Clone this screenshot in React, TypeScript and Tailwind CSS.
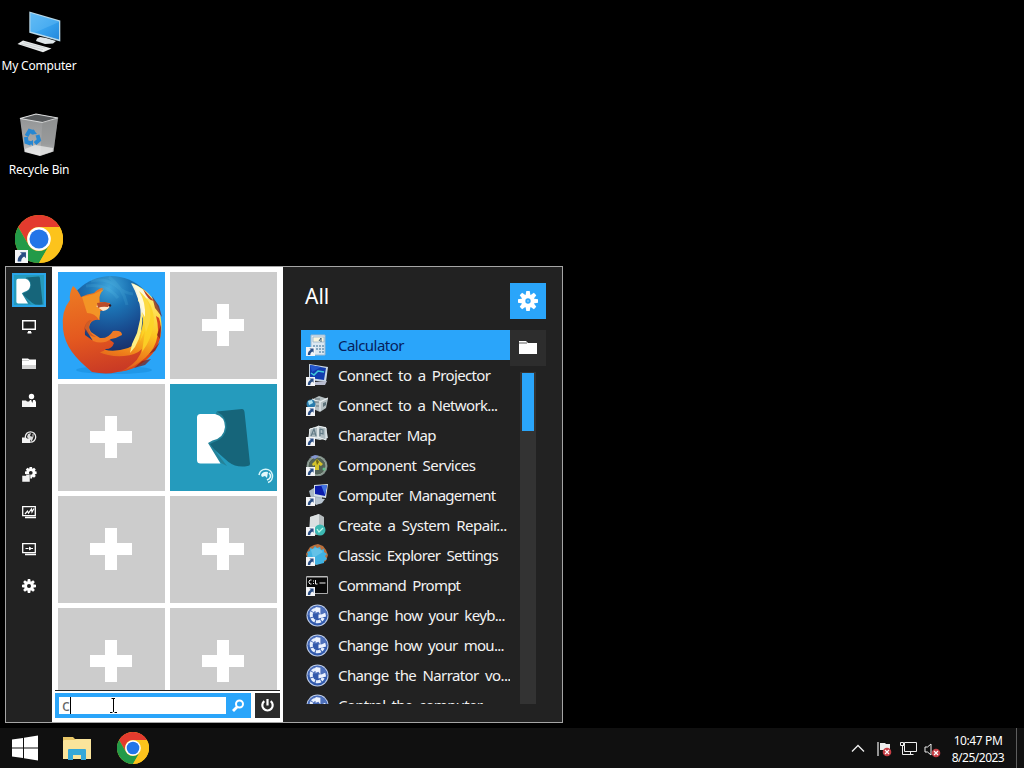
import React from "react";

const gearTeeth = [0, 45, 90, 135, 180, 225, 270, 315];

function Gear({ size, hole = "#222222", dot = false }: { size: number; hole?: string; dot?: boolean }) {
  return (
    <svg width={size} height={size} viewBox="0 0 20 20" className="block">
      <g fill="#fff">
        {gearTeeth.map((a) => (
          <path key={a} d="M8.300 0h3.400l.9 5H7.400z" transform={`rotate(${a} 10 10)`} />
        ))}
        <circle cx="10" cy="10" r="6.600" />
      </g>
      <circle cx="10" cy="10" r={dot ? 2.7 : 2.9} fill={hole} />
      {dot && <circle cx="10" cy="10" r="1" fill="#7fc6fa" />}
    </svg>
  );
}

function Chrome({ size }: { size: number }) {
  return (
    <svg width={size} height={size} viewBox="0 0 48 48" className="block">
      <circle cx="24" cy="24" r="24" fill="#fbc116" />
      <path d="M3.2 12A24 24 0 0 1 44.8 12H24A12 12 0 0 0 13.6 30Z" fill="#e33b2e" />
      <path d="M3.2 12A24 24 0 0 0 24 48L34.4 30A12 12 0 0 1 13.6 30Z" fill="#239a48" />
      <path d="M44.8 12A24 24 0 0 1 24 48L34.4 30A12 12 0 0 0 24 12Z" fill="#fcc31c" />
      <circle cx="24" cy="24" r="11.8" fill="#fff" />
      <circle cx="24" cy="24" r="9.5" fill="#2375e8" />
    </svg>
  );
}

function Shortcut({ size }: { size: number }) {
  return (
    <svg width={size} height={size} viewBox="0 0 12 12" className="absolute bottom-0 left-0 block">
      <path d="M0 0h12v12H0z" fill="#f4f5f7" />
      <path d="M4.6 2h5.5v5.6L8.4 5.9C6.5 7 5.9 8.2 5.7 10.5H2.5C2.2 7.500 3.800 5.200 6.300 3.800Z" fill="#294d84" />
    </svg>
  );
}

function MyComputer() {
  return (
    <svg width="48" height="48" viewBox="15 8 48 48" className="block">
      <defs>
        <linearGradient id="screen" x1="0" y1="0" x2="1" y2="1">
          <stop offset="0" stopColor="#5bb8f4" />
          <stop offset=".5" stopColor="#38a4ef" />
          <stop offset="1" stopColor="#2388dc" />
        </linearGradient>
      </defs>
      <path d="M29.300 11.500 60.300 20.500V41.500L29.300 32.800Z" fill="#b9d9ea" />
      <path d="M30.500 13 59 21.500V39.600L30.500 31.500Z" fill="url(#screen)" />
      <path d="M34 33 59 22v-1L30.500 13v18Z" fill="#72c4f7" opacity=".35" />
      <path d="M40 37 46 38 56 41l-3 2.500-8 .500-9-3 1-2.500Z" fill="#dfe6e9" />
      <path d="M17.500 44 23 40.500 51.500 48.500 43 52.200Z" fill="#e9ecec" />
      <path d="M21 44l22 5.700M23.500 42.500l22 5.600" stroke="#c0c7ca" strokeWidth=".7" />
    </svg>
  );
}

function RecycleBin() {
  return (
    <svg width="48" height="48" viewBox="15 112 48 48" className="block">
      <defs>
        <linearGradient id="bin" x1="0" y1="0" x2="0" y2="1">
          <stop offset="0" stopColor="#8f9192" />
          <stop offset=".7" stopColor="#a9aaab" />
          <stop offset="1" stopColor="#dedede" />
        </linearGradient>
      </defs>
      <path d="M20 118.500 36 114l22 4-4.500 33.500L40 156l-15.500-4Z" fill="url(#bin)" />
      <path d="M20 118.500 36 114l22 4-15.500 4.500Z" fill="#55585a" stroke="#d9dadb" strokeWidth="1.200" />
      <path d="M42.500 122.500 40 156l13.500-4.500L58 118Z" fill="#87898a" opacity=".45" />
      <path d="m25 149 10-4 18 3-.500 3.500L40 155.500l-15-4Z" fill="#ededed" opacity=".7" />
      <path d="m26.500 136 3-5 4.500 1.500M37.500 135l1.500 5-4 3.500M31 143.500l-4.500-1.500-.500-5" fill="none" stroke="#2787d2" strokeWidth="4" />
      <path d="m33 129 4 5-5.500.500ZM33 140v6l-4-3.500Z" fill="#2787d2" />
    </svg>
  );
}

function RMark({ size, className = "" }: { size: number; className?: string }) {
  return (
    <svg width={size} height={size} viewBox="0 0 107 107" className={`block ${className}`}>
      <path d="M47 27.500 72 25q2 0 2.500 3l5.500 52q0 2-2.500 2-11 2-19-4L38 60Z" fill="#16657a" />
      <path d="M47 27.500Q57 33 56.500 44 55 55 43 58.500L40 60l17 22-6-3L35 58Z" fill="#24839a" />
      <path d="M30.500 30H45Q55 32.500 55 43 54 54 42.500 56.500L38 59l12.500 20.500H30.500Q27 79.500 27 76V33.500Q27 30 30.500 30Z" fill="#fff" />
    </svg>
  );
}

function Firefox() {
  return (
    <svg width="107" height="107" viewBox="0 0 107 107" className="block">
      <defs>
        <radialGradient id="globe" cx=".48" cy=".12" r=".75">
          <stop offset="0" stopColor="#3fa5db" />
          <stop offset=".3" stopColor="#1c74b5" />
          <stop offset=".65" stopColor="#184a8e" />
          <stop offset="1" stopColor="#182a60" />
        </radialGradient>
        <linearGradient id="fox" x1=".3" y1="0" x2=".5" y2="1">
          <stop offset="0" stopColor="#ec7a23" />
          <stop offset=".55" stopColor="#e4591f" />
          <stop offset="1" stopColor="#c93a25" />
        </linearGradient>
        <linearGradient id="tail" x1=".2" y1="1" x2=".5" y2="0">
          <stop offset="0" stopColor="#cf4420" />
          <stop offset=".28" stopColor="#ed7a1a" />
          <stop offset=".58" stopColor="#fcc822" />
          <stop offset="1" stopColor="#fff179" />
        </linearGradient>
      </defs>
      <ellipse cx="56" cy="98" rx="38" ry="4" fill="#1689d8" opacity=".5" />
      <circle cx="53" cy="50.500" r="46.500" fill="url(#globe)" />
      <path d="M33 9q14-3 24 4 9 8 18 9M51 5q14 10 18 28M28 14q20-3 32 12" stroke="#68c8ed" strokeWidth="3" fill="none" opacity=".15" />
      <path d="M74 11C91 18 103 32 103.500 53 104 80 83 100 54 100 38 100 26 94 18 83l22-8q12 7 30 1 9-3 12-14 5-11 2-26-1-5-4-7 1-8-6-18Z" fill="url(#tail)" />
      <path d="M98 44q8 29-16 46-11 8-24 10 22-1 37-19 12-17 6-35Z" fill="#d8491c" />
      <path d="m94 24 7 10 3 11-7-9Zm9 29-4 10 3 4Zm-1 17-5 9-6 3Zm-9 17-6 6-11 3 8-7Z" fill="#7d221c" opacity=".75" />
      <path d="M73 11q13 5 19 16l-4-1q7 13 3 26l-3 8q-2-8-3-16l-3 8q2-15-2-25-3-9-7-16Z" fill="#fffbe0" opacity=".95" />
      <path d="M81 19q15 12 15 31-2 17-12 30l3-21-5 10q5-17 2-29l3 5q1-15-6-26Z" fill="#fbd426" opacity=".85" />
      <path d="M84 39q2 21-7 36l-5 6 2-9 5-11Z" fill="#ffef82" />
      <path d="m85 17 11 12q-6 0-11-12Z" fill="#b93e24" />
      <path d="M15 14q5 4 8 11 6-3 13-4 5-5 9-5-5 6-3 14l10 1-1 5q-6 3-9 3-2 4 0 9-7-1-10 4-6 4-5 11l7 5q7 2 12-2 6 1 10 5-2 6-8 6-4 4-7 3 10 5 25 4 12-1 18-7-2 11-16 20-14 7-34 3C17 86 7 74 5 57q-2-18 7-29-1-7 3-14Z" fill="url(#fox)" />
      <path d="m24 25 12-3 10-5q-7 7-4 16 1 8-1 15-4-7-12-7Z" fill="#f39426" />
      <path d="m38 34 8-2 6 1q-1 5-7 6Z" fill="#ffe6c9" />
      <path d="m39 31 8-1 5 2-2 3q-6-1-10 1Z" fill="#b94c2b" />
      <circle cx="52" cy="33.500" r="1.200" fill="#321922" />
      <path d="M27 56q1-7 7-8-5 7-1 12l9 6q8 1 13-7 9-1 9 4-5 3-11 4-8 6-18 2Z" fill="#f07b25" />
      <path d="M26 57q2-9 8-9-5 6-2 12 3 4 6 5-9-1-12-8Z" fill="#9a332b" opacity=".4" />
    </svg>
  );
}

function RailIcon({ kind }: { kind: string }) {
  if (kind === "gear") return <Gear size={14} />;
  const box = { width: 16, height: 16, viewBox: "0 0 16 16", className: "block" };
  const folder = <path d="M1 8.500h4l1-1h3V15H1z" fill="#f2f2f2" stroke="#222" strokeWidth=".5" />;
  if (kind === "monitor")
    return (
      <svg {...box}>
        <path d="M1.700 1.700h12.600v8.600H1.700z" fill="none" stroke="#fff" strokeWidth="1.400" />
        <path d="M7 12h3v1h.500v1.500h-4V13H7z" fill="#fff" />
      </svg>
    );
  if (kind === "folder")
    return (
      <svg {...box}>
        <path d="M1 2.500h6l1.500 1H15V13H1z" fill="#fff" />
        <path d="M1 9h14v4H1z" fill="#d4d4d4" />
        <path d="M1 4.500h7" stroke="#bbb" strokeWidth=".7" />
      </svg>
    );
  if (kind === "user")
    return (
      <svg {...box}>
        <circle cx="10.500" cy="3.500" r="2.700" fill="#fff" />
        <path d="M9 7h1.200l1 3 1-3H14l1 2v5H8V9z" fill="#fff" />
        <path d="M1 7.500h4l1 1h3V14H1z" fill="#f2f2f2" />
      </svg>
    );
  if (kind === "network")
    return (
      <svg {...box}>
        <circle cx="9.500" cy="7" r="5.200" fill="none" stroke="#eee" strokeWidth="1.300" />
        <path d="m6 7 1-3 3-1-1 3 3 1-1 4-3-2Z" fill="#ddd" />
        <path d="M12 4v3l-2 4" fill="none" stroke="#ddd" />
        <path d="M1 7.500h4l1 1h3V13H1z" fill="#f2f2f2" />
      </svg>
    );
  if (kind === "system")
    return (
      <svg {...box}>
        <g transform="translate(4 0) scale(.58)">
          {gearTeeth.map((a) => (
            <path key={a} fill="#fff" d="M7.900 0h4.200l1 5h-6.200z" transform={`rotate(${a} 10 10)`} />
          ))}
          <circle cx="10" cy="10" r="5.200" stroke="#fff" strokeWidth="4" fill="#222" />
        </g>
        {folder}
      </svg>
    );
  return (
    <svg {...box}>
      <path d="M1.700 2.700h12.600v9H1.700zM4 13.500h11" fill="none" stroke="#fff" strokeWidth="1.300" />
      {kind === "chart" ? (
        <path d="m4 10 2.500-3 1 2 3-4 .500 3L13 4.500" fill="none" stroke="#fff" strokeWidth="1.200" />
      ) : (
        <path d="M4.500 7.500h3M8 6l2.500 1.500L8 9M10 7.500h2" fill="#fff" stroke="#fff" strokeWidth="1" />
      )}
    </svg>
  );
}

function AppIcon({ kind }: { kind: string }) {
  let art: React.ReactNode;
  switch (kind) {
    case "calculator":
      art = (
        <>
          <path d="M5 1h14v20H5z" fill="#dce8f2" stroke="#9bb8cf" />
          <path d="M7 3h11v5H7z" fill="#f9f5df" stroke="#8dadc3" strokeWidth=".7" />
          <path d="m13 7 2-3v4" fill="none" stroke="#3b617e" />
          <path d="M7 11h2v2H7zm3 0h2v2h-2zm3 0h2v2h-2zm3 0h2v2h-2zM10 14h2v2h-2zm3 0h2v2h-2zm3 0h2v2h-2zm-3 3h2v2h-2zm3 0h2v2h-2z" fill="#86a9c2" />
        </>
      );
      break;
    case "projector":
      art = (
        <>
          <path d="m3 0 19 3-2 15-17-2Z" fill="#c8d7e6" />
          <path d="m4 1 16 3-2 12-14-2Z" fill="#123cae" />
          <path d="m5 9 3 2 4-4 6 1" fill="none" stroke="#40cbdc" strokeWidth="1.500" />
          <path d="m4 1 11 2-9 5Z" fill="#2456cc" />
          <path d="m9 18 12-1-2 4H9Z" fill="#b9bdd0" />
        </>
      );
      break;
    case "network":
      art = (
        <>
          <path d="m5 6 8-4 9 3-2 9-6 4-9-4Z" fill="#b5bfc2" />
          <path d="m6 5 8 3 8-4M14 8v9" stroke="#e7ecee" fill="none" strokeWidth="1.200" />
          <path d="m17 9 3-1v3l-3 2Z" fill="#5f747c" />
          <circle cx="5" cy="10" r="4.500" fill="#287cad" />
          <path d="m2 7 4-1 1 3-4 2Z" fill="#afe2f0" />
          <path d="M9 5h5M8 8h5M10 12h3" stroke="#65777e" />
        </>
      );
      break;
    case "charmap":
      art = (
        <>
          <path d="m3 5 9-3 8 1 2 11-8 2-10-2Z" fill="#cbd7da" />
          <path d="m12 2 8 2v12l-8-3ZM4 5l8-2v11l-9-1Z" fill="#aebcc1" stroke="#edf2f3" />
          <path d="m5 12 3-7 2 7m-4-2h4m4-5 3 1v4l-3-1m0 3v-7" fill="none" stroke="#637c87" strokeWidth="1.200" />
        </>
      );
      break;
    case "component":
      art = (
        <>
          <circle cx="11" cy="12" r="10.500" fill="#81918a" />
          <circle cx="11" cy="12" r="9" fill="#536358" stroke="#a6b2a8" strokeWidth=".8" />
          <path d="m6 10 5-5 6 5-2 2-2-1v5H9v-5l-2 1Z" fill="#d4c32b" />
          <path d="m10 7 1-2 2 3-2 3Z" fill="#6c641a" />
          <path d="m4 3 5-2 4 1-4 3Z" fill="#8396d1" />
          <circle cx="18" cy="15" r="1.500" fill="#62bf87" />
        </>
      );
      break;
    case "management":
      art = (
        <>
          <path d="m3 7 8-5 5 4v13l-9 2Z" fill="#a9b8c4" />
          <path d="m8 1 14-1-2 14-12-2Z" fill="#d4e0e8" />
          <path d="m9 2 12-1-2 11-10-2Z" fill="#0b1caa" />
          <path d="m15 1 6 0-2 10Z" fill="#4374e2" />
          <path d="m10 14 9 1-3 4-6 2Z" fill="#b8c5d1" />
        </>
      );
      break;
    case "repair":
      art = (
        <>
          <path d="m4 3 9-3 5 3v14l-8 4-7-3Z" fill="#b5bcbe" />
          <path d="m4 3 9-3v16l-9 2Z" fill="#dbe0e1" />
          <circle cx="14" cy="16" r="5.500" fill="#3cb9b3" />
          <path d="m11 15 2 3 4-4" fill="none" stroke="#b8f6e9" strokeWidth="1.300" />
        </>
      );
      break;
    case "classic":
      art = (
        <>
          <path d="m1 14-1-4 2-4 2-3 4-2 4-1 5 2 3 4 2 5-2 6-10 4Z" fill="#b8703e" />
          <path d="m1 12 1-2-1-2 3-1 0-3 3 1 2-3 2 2 3-1 1 3 3-1 0 3 3 2-2 2 2 3-3 2 0 2-8 2Z" fill="#40b2e2" />
          <path d="M5 6q6-5 12 2L7 14Z" fill="#63c2e8" />
        </>
      );
      break;
    case "command":
      art = (
        <>
          <path d="M.5 2.500h21v17H.5z" fill="#080808" stroke="#aaa" />
          <path d="M1 2h20v1.500H1z" fill="#bbb" />
          <path d="M5.500 6H4L3 7v2l1 1h1.500m2-3.500v1m0 1.500v1m2-4v4h2m2-1h6" fill="none" stroke="#eee" />
        </>
      );
      break;
    default:
      return (
        <svg width="23" height="23" viewBox="0 0 24 24" className="block shrink-0">
          <circle cx="12" cy="12" r="11.500" fill="#bdcce9" />
          <circle cx="12" cy="12" r="10.500" fill="#3159ac" />
          <path d="M2 12A10 10 0 0 1 22 12Q12 8 2 12Z" fill="#6d8aca" opacity=".5" />
          <path d="M11 5.500Q5 6 5.500 12 6 18 12 18.500q4 0 6-4" fill="none" stroke="#e7effc" strokeWidth="3.200" strokeDasharray="5 1" />
          <path d="m10 3 5 1v7l-2-3-3 1ZM21 13l-8 2 0-4q4 0 7-2Z" fill="#edf3ff" />
        </svg>
      );
  }
  return (
    <span className="relative block h-[22px] w-[23px] shrink-0">
      <svg width="22" height="22" viewBox="0 0 22 22" className="block">{art}</svg>
      <Shortcut size={9} />
    </span>
  );
}

const items = [
  ["Calculator", "calculator", "tracking-[-0.53px]"],
  ["Connect to a Projector", "projector", "tracking-[-0.62px]"],
  ["Connect to a Network...", "network", "tracking-[-0.64px]"],
  ["Character Map", "charmap", "tracking-[-0.7px]"],
  ["Component Services", "component", "tracking-[-0.56px]"],
  ["Computer Management", "management", "tracking-[-0.8px]"],
  ["Create a System Repair...", "repair", "tracking-[-0.5px]"],
  ["Classic Explorer Settings", "classic", "tracking-[-0.68px]"],
  ["Command Prompt", "command", "tracking-[-0.78px]"],
  ["Change how your keyb...", "ease", "tracking-[-0.66px]"],
  ["Change how your mou...", "ease", "tracking-[-0.7px]"],
  ["Change the Narrator vo...", "ease", "tracking-[-0.6px]"],
  ["Control the computer...", "ease", "tracking-[-0.68px]"],
];

const railKinds = ["monitor", "folder", "user", "network", "system", "chart", "run", "gear"];

function PlusTile() {
  return (
    <div className="flex h-[107px] items-center justify-center bg-[#cccccc] pr-px pb-px">
      <svg width="42" height="42" viewBox="0 0 42 42" className="block">
        <path d="M15 0h12v15h15v12H27v15H15V27H0V15h15z" fill="#fff" />
      </svg>
    </div>
  );
}

function Tiles() {
  return (
    <div className="grid h-[418px] grid-cols-[107px_107px] content-start gap-[5px] overflow-hidden">
      <div className="h-[107px] bg-[#2aa5f8]">
        <Firefox />
      </div>
      <PlusTile />
      <PlusTile />
      <div className="relative h-[107px] bg-[#259bbd]">
        <RMark size={107} />
        <svg width="18" height="18" viewBox="0 0 18 18" className="absolute right-[2px] bottom-[6px]">
          <path d="M2 8A6.800 6.800 0 1 1 11 15.500" fill="none" stroke="#d7f5fa" strokeWidth="1.600" />
          <path d="M4 8q2-4 7-3l-1 6-2-2-3 1Z" fill="#e4f9fc" />
          <path d="M12 6q3 3 0 6l-2 1" fill="none" stroke="#e4f9fc" strokeWidth="1.500" />
        </svg>
      </div>
      <PlusTile />
      <PlusTile />
      <PlusTile />
      <PlusTile />
    </div>
  );
}

function StartMenu() {
  return (
    <section className="absolute top-[266px] left-[5px] flex h-[457px] w-[558px] border border-[#a5a5a5] bg-[#222222]">
      <nav className="flex w-[46px] shrink-0 flex-col items-center gap-[3px] pt-1.5">
        <div className="flex h-[34px] w-[34px] items-center justify-center overflow-hidden border-2 border-[#2aa5e8] bg-[#259bbd]">
          <RMark size={53} className="shrink-0" />
        </div>
        {railKinds.map((kind) => (
          <div key={kind} className="flex h-[34px] w-[34px] items-center justify-center">
            <RailIcon kind={kind} />
          </div>
        ))}
      </nav>
      <div className="w-[231px] shrink-0 bg-white pt-[5px]">
        <div className="px-1.5">
          <Tiles />
        </div>
        <div className="mx-[3px] h-px bg-[#222222]" />
        <div className="mt-0.5 flex h-[25px] gap-1 px-[3px]">
          <div className="flex w-[196px] items-center bg-[#2aa5fa] pl-1">
            <div className="flex h-[17px] w-[167px] items-center bg-white pl-[3px] text-[16px] leading-[17px] text-[#666]">
              <span className="w-2">c</span>
              <span className="h-[17px] w-px bg-black" />
            </div>
            <svg width="14" height="14" viewBox="0 0 14 14" className="ml-[5px]">
              <circle cx="8.500" cy="5" r="3.500" fill="none" stroke="#fff" strokeWidth="2" />
              <path d="m6 8-4 4" stroke="#fff" strokeWidth="2.800" />
            </svg>
          </div>
          <div className="flex w-[25px] items-center justify-center bg-[#2b2b2b]">
            <svg width="15" height="15" viewBox="0 0 15 15">
              <path d="M4.300 3.200a5.200 5.200 0 1 0 6.400 0M7.500 1v6.500" fill="none" stroke="#fff" strokeWidth="2.200" />
            </svg>
          </div>
        </div>
      </div>
      <div className="flex flex-1 flex-col pl-[18px]">
        <header className="flex h-[63px] justify-between pr-4 pl-[4px]">
          <h1 className="pt-[14px] text-[21px] leading-[30px] font-normal">All</h1>
          <button className="mt-4 flex h-9 w-9 items-center justify-center bg-[#2aa5fa]">
            <Gear size={20} hole="#2aa5fa" dot />
          </button>
        </header>
        <div className="flex h-[374px]">
          <ul className="h-[374px] w-[209px] shrink-0 overflow-hidden">
            {items.map(([label, kind, tracking], i) => (
              <li
                key={label}
                className={`flex h-[30px] items-center pl-[5px] text-[15px] [word-spacing:3px] ${tracking} ${i === 0 ? "bg-[#2aa5fa] text-[#06205c]" : "text-[#f3f3f3]"}`}
              >
                <AppIcon kind={kind} />
                <span className="ml-[9px] whitespace-nowrap">{label}</span>
              </li>
            ))}
          </ul>
          <div className="flex w-9 flex-col items-center">
            <button className="flex h-9 w-9 items-center justify-center bg-[#2d2d2d]">
              <svg width="18" height="14" viewBox="0 0 18 14">
                <path d="M0 0h7l2 2h9v11H0z" fill="#fff" />
                <path d="M0 2h8" stroke="#333" strokeWidth=".8" />
              </svg>
            </button>
            <div className="mt-1.5 flex w-4 flex-1 justify-center bg-[#333333] pt-px">
              <div className="h-[58px] w-3 bg-[#2aa5fa]" />
            </div>
          </div>
        </div>
      </div>
    </section>
  );
}

function Taskbar() {
  return (
    <footer className="flex h-10 items-center bg-[#101010]">
      <svg width="26" height="26" viewBox="0 0 26 26" className="ml-3">
        <path d="M0 4.500 11 3v9.500H0zM12 2.800 26 .500v12H12zM0 13.500h11V23L0 21.500zM12 13.500h14v12L12 23.200z" fill="#fff" />
      </svg>
      <svg width="28" height="26" viewBox="0 0 28 26" className="ml-[25px]">
        <path d="M0 2h10l2 2h16v20H0z" fill="#e9c767" />
        <path d="M1 5h10l2-1h15v20H0V6z" fill="#fae49b" />
        <path d="M5 25V15q0-1 1-1h16q1 0 1 1v10h-5v-5h-8v5z" fill="#35a8d8" />
      </svg>
      <div className="ml-[26px]">
        <Chrome size={32} />
      </div>
      <div className="ml-auto flex h-10 items-center">
        <svg width="14" height="9" viewBox="0 0 14 9">
          <path d="m1 7.500 6-6 6 6" fill="none" stroke="#eee" strokeWidth="1.300" />
        </svg>
        <svg width="15" height="17" viewBox="0 0 15 17" className="mt-0.5 ml-3">
          <path d="M1 1v14" stroke="#eee" strokeWidth="1.200" />
          <path d="M3 2h5l1 1h4v6H3z" fill="#eee" />
          <circle cx="10" cy="11" r="4.300" fill="#c63e45" />
          <path d="m8 9 4 4m0-4-4 4" stroke="#fff" strokeWidth="1.200" />
        </svg>
        <svg width="17" height="16" viewBox="0 0 17 16" className="mt-0.5 ml-2">
          <path d="M3.500 4.500V1.500H.500v3h4v-3h12v9h-12v-6M2.500 5v8.500h11M10.500 11v2.500" fill="none" stroke="#eee" />
        </svg>
        <svg width="17" height="16" viewBox="0 0 17 16" className="mt-1 ml-[7px]">
          <path d="M1 5h2.500l3.500-3v11L3.500 10H1z" fill="none" stroke="#eee" />
          <circle cx="12" cy="11" r="4.300" fill="#c63e45" />
          <path d="m10 9 4 4m0-4-4 4" stroke="#fff" strokeWidth="1.200" />
        </svg>
        <div className="ml-[9px] w-14 pt-0.5 text-center text-[12px] leading-[17px] tracking-[-0.4px] whitespace-nowrap">
          <div>10:47 PM</div>
          <div className="tracking-[-0.5px]">8/25/2023</div>
        </div>
        <div className="ml-[10px] h-10 w-px bg-[#5e5e5e]" />
        <div className="w-[7px]" />
      </div>
    </footer>
  );
}

export default function App() {
  return (
    <main className="relative flex h-[768px] w-[1024px] flex-col overflow-hidden bg-black font-['Noto_Sans',sans-serif] text-white">
      <div className="flex w-[78px] flex-1 flex-col">
        <div className="flex h-[104px] flex-col items-center pt-2">
          <MyComputer />
          <span className="text-[12px] leading-5 tracking-[-0.2px] whitespace-nowrap">My Computer</span>
        </div>
        <div className="flex h-[104px] flex-col items-center pt-2">
          <RecycleBin />
          <span className="text-[12px] leading-5 tracking-[-0.25px] whitespace-nowrap">Recycle Bin</span>
        </div>
        <div className="flex justify-center pt-[7px]">
          <div className="relative">
            <Chrome size={48} />
            <Shortcut size={13} />
          </div>
        </div>
      </div>
      <StartMenu />
      <Taskbar />
      <svg width="7" height="15" viewBox="0 0 7 15" className="absolute top-[698px] left-[110px]">
        <path d="M1.500 .500H5M3.500 0v14M0 14.500h2.500M4.500 14.500H7" fill="none" stroke="#000" />
      </svg>
    </main>
  );
}
